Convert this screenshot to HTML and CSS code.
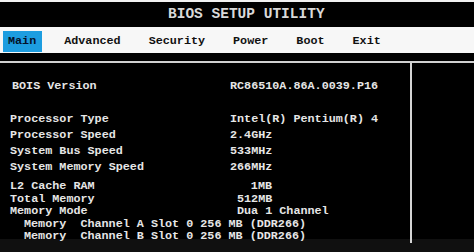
FILE: index.html
```
<!DOCTYPE html>
<html lang="en">

<head>
    <meta charset="UTF-8">
    <meta name="viewport" content="width=device-width, initial-scale=1.0">
    <title>BIOS Setup Utility</title>
    <link rel="stylesheet" href="styles.css">
</head>

<body>

    <div class="title">BIOS SETUP UTILITY</div>

    <div class="menu">
        <span class="item active">Main</span>
        <span class="item">Advanced</span>
        <span class="item">Security</span>
        <span class="item">Power</span>
        <span class="item">Boot</span>
        <span class="item">Exit</span>
    </div>

    <div class="screen">
        <div class="info">
            <div class="row version">
                <span class="label">BOIS Version</span>
                <span class="value">RC86510A.86A.0039.P16</span>
            </div>

            <div class="group">
                <div class="row">
                    <span class="label">Processor Type</span>
                    <span class="value">Intel(R) Pentium(R) 4</span>
                </div>
                <div class="row">
                    <span class="label">Processor Speed</span>
                    <span class="value">2.4GHz</span>
                </div>
                <div class="row">
                    <span class="label">System Bus Speed</span>
                    <span class="value">533MHz</span>
                </div>
                <div class="row">
                    <span class="label">System Memory Speed</span>
                    <span class="value">266MHz</span>
                </div>
            </div>

            <div class="group memory">
                <div class="row">
                    <span class="label">L2 Cache RAM</span>
                    <span class="value size">1MB</span>
                </div>
                <div class="row">
                    <span class="label">Total Memory</span>
                    <span class="value size">512MB</span>
                </div>
                <div class="row">
                    <span class="label">Memory Mode</span>
                    <span class="value">Dua 1 Channel</span>
                </div>
                <div class="row slot">Memory  Channel A Slot 0 256 MB (DDR266)</div>
                <div class="row slot">Memory  Channel B Slot 0 256 MB (DDR266)</div>
            </div>
        </div>
        <div class="help"></div>
    </div>

    <div class="footer"></div>

</body>

</html>
```

FILE: styles.css
```
body {
    margin: 0;
    width: 474px;
    height: 252px;
    overflow: hidden;
    background-color: #000;
    color: #e6e6e6;
    font-family: 'Liberation Mono', 'DejaVu Sans Mono', monospace;
    font-weight: 700;
}

.title {
    border-top: 2px solid #f2f2f2;
    height: 25px;
    line-height: 25px;
    padding-left: 168px;
    font-size: 14.5px;
    color: #d9d9d9;
}

.menu {
    display: flex;
    gap: 17px;
    height: 21px;
    padding: 4px 0 1px 3px;
    background-color: #f7f7f7;
    color: #111;
    font-size: 11.75px;
}

.menu .item {
    padding: 0 6px 0 5px;
    line-height: 21px;
}

.menu .active {
    background-color: #1d9de0;
    color: #04122a;
}

.screen {
    display: grid;
    grid-template-columns: 410px 1fr;
    height: 176px;
    margin-top: 8px;
    border-top: 2px solid #d0d0d0;
}

.help {
    border-left: 2px solid #d4d4d4;
}

.info {
    padding: 15px 0 0 10px;
    font-size: 11.75px;
}

.row {
    display: flex;
    line-height: 16px;
    white-space: pre;
}

.row .label {
    width: 220px;
}

.version {
    padding-left: 2px;
}

.version .label {
    width: 218px;
}

.group {
    margin-top: 17px;
}

.memory {
    margin-top: 5px;
}

.memory .row {
    line-height: 12.5px;
}

.memory .label {
    width: 227px;
}

.memory .size {
    width: 35px;
    text-align: right;
}

.memory .slot {
    padding-left: 14px;
}

.footer {
    height: 13px;
    background-color: #101010;
}
```
